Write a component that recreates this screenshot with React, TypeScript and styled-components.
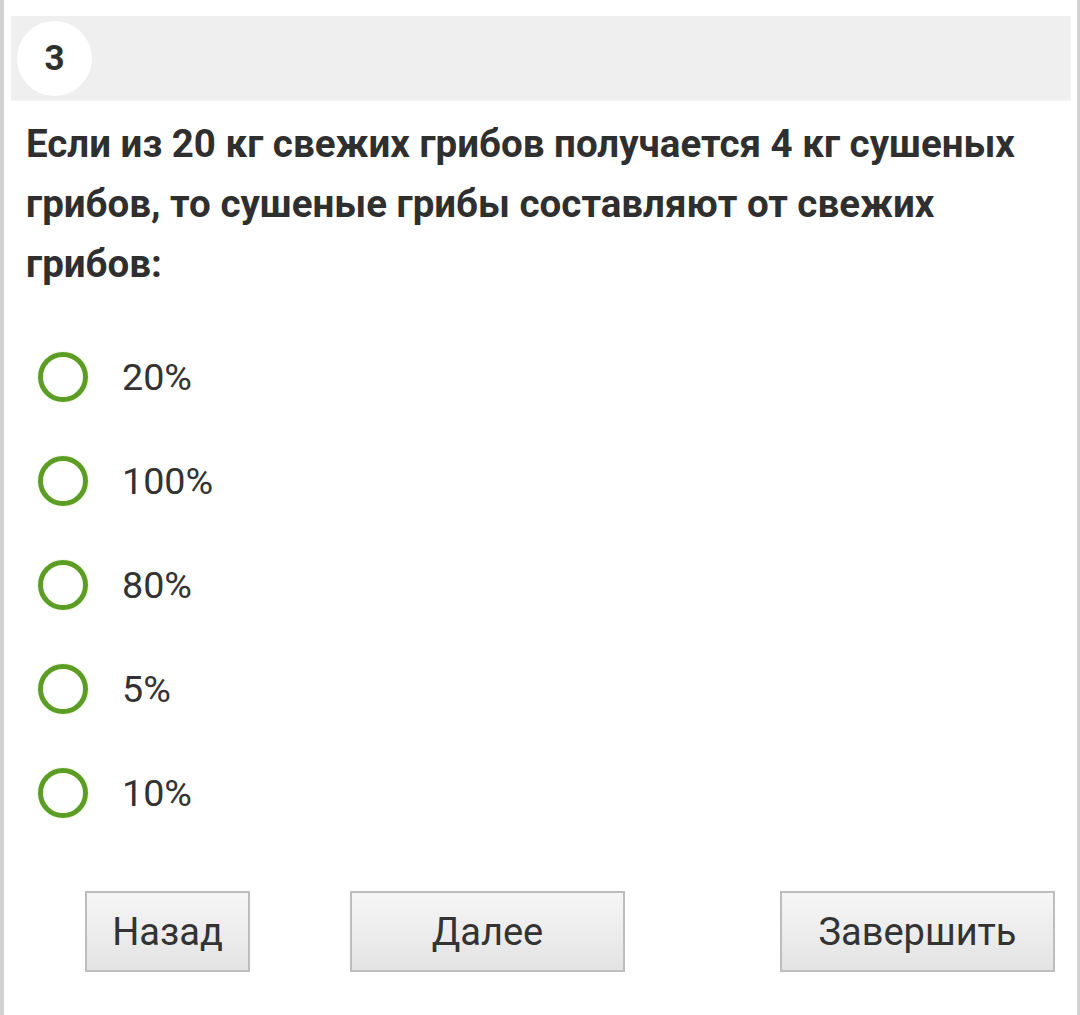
import React, {FC, useState} from 'react';
import styled, {createGlobalStyle} from 'styled-components';

const GlobalStyle = createGlobalStyle`
    html, body {
        margin: 0;
        padding: 0;
        background: #ffffff;
    }

    body {
        font-family: Roboto, "Noto Sans", Arial, sans-serif;
        color: #333333;
    }
`;

const Page = styled.div`
    box-sizing: border-box;
    min-height: 1015px;
    border-left: 4px solid #d2d2d2;
    border-right: 3px solid #d2d2d2;
    padding-top: 16px;
    display: flex;
    flex-direction: column;
`;

const Header = styled.div`
    display: flex;
    align-items: center;
    height: 84px;
    margin: 0 7px;
    padding-left: 6px;
    background: #efefef;
    box-shadow: 1px 1px 1px rgba(0, 0, 0, 0.04);
`;

const NumberBadge = styled.div`
    display: flex;
    align-items: center;
    justify-content: center;
    width: 75px;
    height: 75px;
    border-radius: 50%;
    background: #ffffff;
    font-size: 35px;
    font-weight: 700;
    color: #2f2f2f;
`;

const Question = styled.div`
    margin: 14px 40px 0 22px;
    font-size: 38.5px;
    font-weight: 700;
    line-height: 60px;
    color: #2f2f2f;
`;

const Options = styled.div`
    display: flex;
    flex-direction: column;
    margin-top: 31px;
    padding-left: 34px;
`;

const OptionRow = styled.label`
    display: flex;
    align-items: center;
    height: 104px;
    cursor: pointer;
`;

const Radio = styled.span<{checked: boolean}>`
    box-sizing: border-box;
    display: flex;
    align-items: center;
    justify-content: center;
    width: 50px;
    height: 50px;
    border-radius: 50%;
    border: 5px solid #5c9e24;
    box-shadow: 0 0 2px rgba(140, 200, 60, 0.35);

    &::after {
        content: '';
        width: 22px;
        height: 22px;
        border-radius: 50%;
        background: #5c9e24;
        display: ${(p) => (p.checked ? 'block' : 'none')};
    }
`;

const OptionLabel = styled.span`
    margin-left: 34px;
    font-size: 37.7px;
    color: #333333;
`;

const Buttons = styled.div`
    display: flex;
    align-items: center;
    margin-top: 46px;
    padding-left: 81px;
`;

const NavButton = styled.button<{width: number; gapBefore: number}>`
    box-sizing: border-box;
    width: ${(p) => p.width}px;
    height: 81px;
    margin-left: ${(p) => p.gapBefore}px;
    border: 2px solid #bdbdbd;
    border-radius: 0;
    background: linear-gradient(to bottom, #f6f6f6, #e3e3e3);
    font-family: Roboto, "Noto Sans", Arial, sans-serif;
    font-size: 38px;
    color: #333333;
    padding: 0;
    cursor: pointer;
`;

const answers = ['20%', '100%', '80%', '5%', '10%'];

const App: FC = () => {
    const [selected, setSelected] = useState<number | null>(null);

    return (
        <>
            <GlobalStyle/>
            <Page>
                <Header>
                    <NumberBadge>{'3'}</NumberBadge>
                </Header>
                <Question>
                    {'Если из 20 кг свежих грибов получается 4 кг сушеных грибов, то сушеные грибы составляют от свежих грибов:'}
                </Question>
                <Options>
                    {answers.map((a, i) => (
                        <OptionRow
                            key={a}
                            onClick={() => setSelected(i)}
                        >
                            <Radio checked={selected === i}/>
                            <OptionLabel>{a}</OptionLabel>
                        </OptionRow>
                    ))}
                </Options>
                <Buttons>
                    <NavButton
                        width={165}
                        gapBefore={0}
                    >
                        {'Назад'}
                    </NavButton>
                    <NavButton
                        width={275}
                        gapBefore={100}
                    >
                        {'Далее'}
                    </NavButton>
                    <NavButton
                        width={275}
                        gapBefore={155}
                    >
                        {'Завершить'}
                    </NavButton>
                </Buttons>
            </Page>
        </>
    );
};

export default App;
